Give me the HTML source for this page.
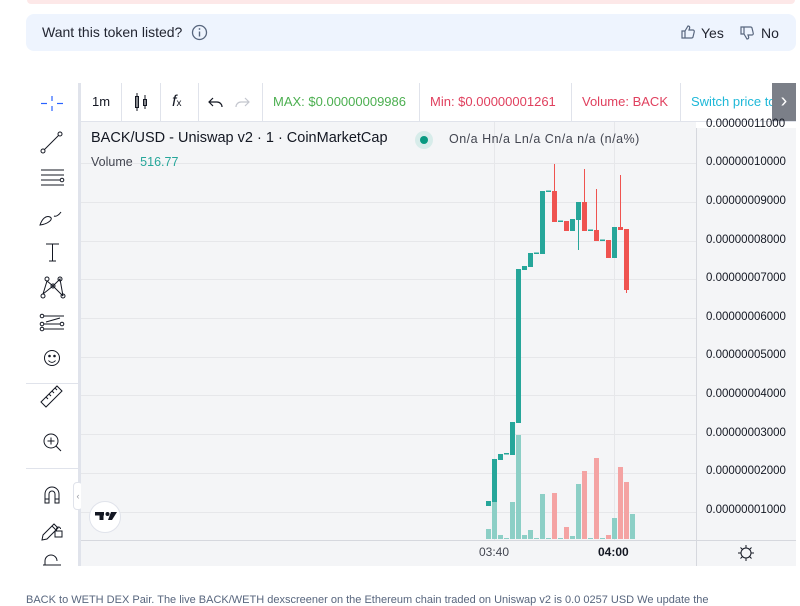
<!DOCTYPE html>
<html><head><meta charset="utf-8"><style>
body{margin:0;width:800px;height:600px;overflow:hidden;background:#fff;font-family:"Liberation Sans",sans-serif;position:relative}
.a{position:absolute}
.tb{font-size:13px;top:83px;height:38px;line-height:38px;white-space:nowrap}
.sep{position:absolute;top:83px;width:1px;height:38px;background:#e0e3eb}
.pl{position:absolute;left:706px;font-size:11.5px;color:#131722}
</style></head><body>
<div class="a" style="left:27px;top:0;width:768px;height:4px;background:#fde8e8;border-radius:0 0 8px 8px"></div>
<div class="a" style="left:26px;top:14px;width:770px;height:37px;background:#eef4fe;border-radius:8px"></div>
<div class="a" style="left:42px;top:24px;font-size:14px;color:#222531">Want this token listed?</div>
<svg class="a" style="left:191px;top:24px" width="17" height="17"><circle cx="8.5" cy="8.5" r="7" fill="none" stroke="#58667e" stroke-width="1.3"/><line x1="8.5" y1="7.5" x2="8.5" y2="12.5" stroke="#58667e" stroke-width="1.4"/><circle cx="8.5" cy="5" r="0.9" fill="#58667e"/></svg>
<svg class="a" style="left:680px;top:24px" width="16" height="16"><path d="M2 7h3v7H2zM5 7l3-5c1.5 0 2 1 1.5 2.5L9 6h4c1 0 1.5 1 1.2 2l-1.2 5c-.3.8-.8 1-1.5 1H5" fill="none" stroke="#58667e" stroke-width="1.2"/></svg>
<div class="a" style="left:701px;top:25px;font-size:14px;color:#222531">Yes</div>
<svg class="a" style="left:739px;top:25px" width="16" height="16"><path d="M2 2h3v7H2zM5 9l3 5c1.5 0 2-1 1.5-2.5L9 10h4c1 0 1.5-1 1.2-2L13 3c-.3-.8-.8-1-1.5-1H5" fill="none" stroke="#58667e" stroke-width="1.2"/></svg>
<div class="a" style="left:761px;top:25px;font-size:14px;color:#222531">No</div>

<!-- left toolbar -->
<div class="a" style="left:78px;top:83px;width:3px;height:483px;background:#e0e3eb"></div>
<div class="a" style="left:26px;top:383px;width:52px;height:1px;background:#e0e3eb"></div>
<div class="a" style="left:26px;top:468px;width:52px;height:1px;background:#e0e3eb"></div>
<svg class="a" style="left:26px;top:83px" width="52" height="483" fill="none" stroke="#131722" stroke-width="1">
<g stroke="#2962ff" stroke-width="1.2"><line x1="26" y1="13" x2="26" y2="18"/><line x1="26" y1="23" x2="26" y2="28"/><line x1="15" y1="20.5" x2="21" y2="20.5"/><line x1="31" y1="20.5" x2="37" y2="20.5"/></g>
<circle cx="17" cy="68" r="2"/><circle cx="34" cy="51" r="2"/><line x1="18.5" y1="66.5" x2="32.5" y2="52.5"/>
<line x1="15" y1="87" x2="38" y2="87"/><line x1="15" y1="92" x2="38" y2="92"/><line x1="15" y1="97" x2="34" y2="97"/><line x1="15" y1="102" x2="38" y2="102"/><circle cx="36" cy="97" r="1.8"/>
<path d="M14 142c2-6 6-10 10-8s-2 7-10 8zM28 133c2 1 5-1 7-4"/>
<path d="M20 161h13M26.5 161v17M23 178h7"/>
<circle cx="17" cy="213" r="2"/><circle cx="21" cy="196" r="2"/><circle cx="27" cy="203" r="2"/><circle cx="34" cy="196" r="2"/><circle cx="37" cy="213" r="2"/><path d="M17 211l4-13 6 5 7-7 3 17M17 211l10-8 10 10"/>
<circle cx="16" cy="233" r="1.8"/><circle cx="16" cy="241" r="1.8"/><circle cx="16" cy="246" r="1.8"/><circle cx="36" cy="241" r="1.8"/><path d="M18 233h20M18 241h16M18 246h20M20 239l14-4" />
<circle cx="26" cy="275" r="7.5"/><circle cx="23.5" cy="273" r=".8" fill="#131722"/><circle cx="28.5" cy="273" r=".8" fill="#131722"/><path d="M22.5 277.5c2 2.5 5 2.5 7 0"/>
<path d="M15 319l16-16 5 5-16 16zM20 314l2 2M23 311l2 2M26 308l2 2M29 305l2 2"/>
<circle cx="25" cy="358" r="7"/><path d="M30 363l5 5M25 354.5v7M21.5 358h7"/>
<path d="M19 420v-9a7 7 0 0 1 14 0v9h-4v-9a3 3 0 0 0-6 0v9zM19 416h4M29 416h4"/>
<path d="M17 452l11-11 4 4-11 11-5 1zM26 443l4 4"/><rect x="29" y="448" width="7" height="6"/><path d="M30.5 448v-2a2 2 0 0 1 4 0"/>
<path d="M19 482v-4a6 6 0 0 1 12 0M17 482h18"/>
</svg>
<div class="a" style="left:73px;top:482px;width:8px;height:26px;background:#fff;border:1px solid #e0e3eb;border-radius:4px;font-size:9px;color:#9598a1;text-align:center;line-height:26px">‹</div>

<!-- top toolbar -->
<div class="a" style="left:81px;top:83px;width:715px;height:38px;background:#fff;border-bottom:1px solid #e0e3eb"></div>
<div class="sep" style="left:121px"></div><div class="sep" style="left:160px"></div><div class="sep" style="left:198px"></div><div class="sep" style="left:262px"></div><div class="sep" style="left:419px"></div><div class="sep" style="left:571px"></div><div class="sep" style="left:680px"></div>
<div class="a tb" style="left:92px;color:#131722">1m</div>
<svg class="a" style="left:131px;top:92px" width="20" height="20" fill="none" stroke="#131722"><rect x="4.5" y="4.5" width="3" height="11"/><line x1="6" y1="1" x2="6" y2="19"/><rect x="12.5" y="7.5" width="3" height="6"/><line x1="14" y1="3" x2="14" y2="17"/></svg>
<div class="a tb" style="left:172px;color:#131722;font-size:16px;font-style:italic">f<span style="font-size:10px;font-style:normal">x</span></div>
<svg class="a" style="left:206px;top:92px" width="50" height="20" fill="none" stroke-width="1.2"><path d="M7 6l-4 4 4 4M3 10h8a5 5 0 0 1 5 5" stroke="#131722"/><path d="M39 6l4 4-4 4M43 10h-8a5 5 0 0 0-5 5" stroke="#c3c6ce"/></svg>
<div class="a tb" style="left:273px;color:#4caf50">MAX: $0.00000009986</div>
<div class="a tb" style="left:430px;color:#e0405e">Min: $0.00000001261</div>
<div class="a tb" style="left:582px;color:#e0405e">Volume: BACK</div>
<div class="a tb" style="left:691px;color:#1eb8d8">Switch price to B</div>
<div class="a" style="left:772px;top:83px;width:24px;height:38px;background:#7b7f88;color:#fff;font-size:20px;line-height:36px;text-align:center">›</div>

<!-- chart -->
<div class="a" style="left:81px;top:122px;width:715px;height:444px;background:#f4f5f7"></div>
<div class="a" style="left:696px;top:122px;width:1px;height:444px;background:#d6d8de"></div>
<div class="a" style="left:81px;top:540px;width:715px;height:1px;background:#d6d8de"></div>
<div class="a" style="left:696px;top:122px;width:100px;height:6px;background:#fff"></div>
<svg class="a" style="left:0;top:0" width="800" height="600">
<g stroke="#e6e7ea" stroke-width="1"><line x1="81" y1="163.5" x2="696" y2="163.5"/><line x1="81" y1="202.5" x2="696" y2="202.5"/><line x1="81" y1="241.5" x2="696" y2="241.5"/><line x1="81" y1="279.5" x2="696" y2="279.5"/><line x1="81" y1="318.5" x2="696" y2="318.5"/><line x1="81" y1="357.5" x2="696" y2="357.5"/><line x1="81" y1="395.5" x2="696" y2="395.5"/><line x1="81" y1="434.5" x2="696" y2="434.5"/><line x1="81" y1="473.5" x2="696" y2="473.5"/><line x1="81" y1="512.5" x2="696" y2="512.5"/><line x1="494.5" y1="122" x2="494.5" y2="540"/><line x1="614.5" y1="122" x2="614.5" y2="540"/></g>
<g fill="#8ccfc6"><rect x="486" y="529" width="5" height="10"/><rect x="492" y="502" width="5" height="37"/><rect x="498" y="535" width="5" height="4"/><rect x="504" y="538" width="5" height="1"/><rect x="510" y="502" width="5" height="37"/><rect x="516" y="435" width="5" height="104"/><rect x="522" y="535" width="5" height="4"/><rect x="528" y="530" width="5" height="9"/><rect x="534" y="538" width="5" height="1"/><rect x="540" y="494" width="5" height="45"/><rect x="546" y="538" width="5" height="1"/><rect x="558" y="538" width="5" height="1"/><rect x="570" y="536" width="5" height="3"/><rect x="576" y="484" width="5" height="55"/><rect x="588" y="538" width="5" height="1"/><rect x="600" y="538" width="5" height="1"/><rect x="612" y="518" width="5" height="21"/><rect x="630" y="514" width="5" height="25"/></g>
<g fill="#f4a3a3"><rect x="552" y="493" width="5" height="46"/><rect x="564" y="527" width="5" height="12"/><rect x="582" y="471" width="5" height="68"/><rect x="594" y="458" width="5" height="81"/><rect x="606" y="535" width="5" height="4"/><rect x="618" y="467" width="5" height="72"/><rect x="624" y="482" width="5" height="57"/></g>
<g fill="#26a69a"><rect x="486" y="501" width="5" height="5"/><rect x="492" y="459" width="5" height="43"/><rect x="498" y="454" width="5" height="6"/><rect x="504" y="453" width="5" height="1.5"/><rect x="510" y="422" width="5" height="33"/><rect x="516" y="269" width="5" height="154"/><rect x="522" y="266" width="5" height="4"/><rect x="528" y="253" width="5" height="14"/><rect x="534" y="252.5" width="5" height="1.5"/><rect x="540" y="191" width="5" height="63"/><rect x="546" y="190.5" width="5" height="1.5"/><rect x="558" y="220.5" width="5" height="1.5"/><rect x="570" y="219" width="5" height="12"/><rect x="576" y="202" width="5" height="18"/><rect x="578" y="202" width="1" height="48"/><rect x="588" y="229.5" width="5" height="1.5"/><rect x="600" y="239.5" width="5" height="1.5"/><rect x="612" y="227" width="5" height="31"/></g>
<g fill="#ef5350"><rect x="552" y="191" width="5" height="31"/><rect x="554" y="164" width="1" height="27"/><rect x="564" y="221" width="5" height="10"/><rect x="582" y="202" width="5" height="29"/><rect x="584" y="169" width="1" height="33"/><rect x="594" y="230" width="5" height="11"/><rect x="596" y="189" width="1" height="41"/><rect x="606" y="240" width="5" height="18"/><rect x="618" y="227" width="5" height="3"/><rect x="620" y="175" width="1" height="52"/><rect x="624" y="229" width="5" height="61"/><rect x="626" y="289" width="1" height="4"/></g>
<circle cx="105" cy="517" r="15.5" fill="#fff" stroke="#e0e3eb"/>
<g fill="#131722"><rect x="95" y="512" width="9" height="3.5"/><rect x="99.5" y="512" width="4" height="8"/><circle cx="107.5" cy="514" r="2"/><path d="M111 512h6l-5 8h-4z"/></g>
</svg>
<div class="a" style="left:91px;top:130px;font-size:14.5px;color:#131722">BACK/USD - Uniswap v2 · 1 · CoinMarketCap</div>
<div class="a" style="left:415px;top:131px;width:18px;height:18px;border-radius:50%;background:#d7ecea"></div>
<div class="a" style="left:420px;top:136px;width:8px;height:8px;border-radius:50%;background:#089981"></div>
<div class="a" style="left:449px;top:132px;font-size:12.5px;color:#434651;letter-spacing:.5px">On/a Hn/a Ln/a Cn/a n/a (n/a%)</div>
<div class="a" style="left:91px;top:155px;font-size:12.5px;color:#434651">Volume <span style="color:#26a69a;margin-left:4px">516.77</span></div>
<div class="pl" style="top:118px">0.00000011000</div>
<div class="pl" style="top:156px">0.00000010000</div>
<div class="pl" style="top:195px">0.00000009000</div>
<div class="pl" style="top:234px">0.00000008000</div>
<div class="pl" style="top:272px">0.00000007000</div>
<div class="pl" style="top:311px">0.00000006000</div>
<div class="pl" style="top:349px">0.00000005000</div>
<div class="pl" style="top:388px">0.00000004000</div>
<div class="pl" style="top:427px">0.00000003000</div>
<div class="pl" style="top:465px">0.00000002000</div>
<div class="pl" style="top:504px">0.00000001000</div>
<div class="a" style="left:479px;top:545px;font-size:12px;color:#434651">03:40</div>
<div class="a" style="left:598px;top:545px;font-size:12px;color:#131722;font-weight:bold">04:00</div>
<svg class="a" style="left:737px;top:544px" width="18" height="18" fill="none" stroke="#131722"><circle cx="9" cy="9" r="5"/><path d="M9 1v3M9 14v3M1 9h3M14 9h3M3.5 3.5l2 2M12.5 12.5l2 2M3.5 14.5l2-2M12.5 5.5l2-2"/></svg>
<div class="a" style="left:26px;top:594px;font-size:11px;color:#58667e;white-space:nowrap">BACK to WETH DEX Pair. The live BACK/WETH dexscreener on the Ethereum chain traded on Uniswap v2 is 0.0 0257 USD We update the</div>
</body></html>
